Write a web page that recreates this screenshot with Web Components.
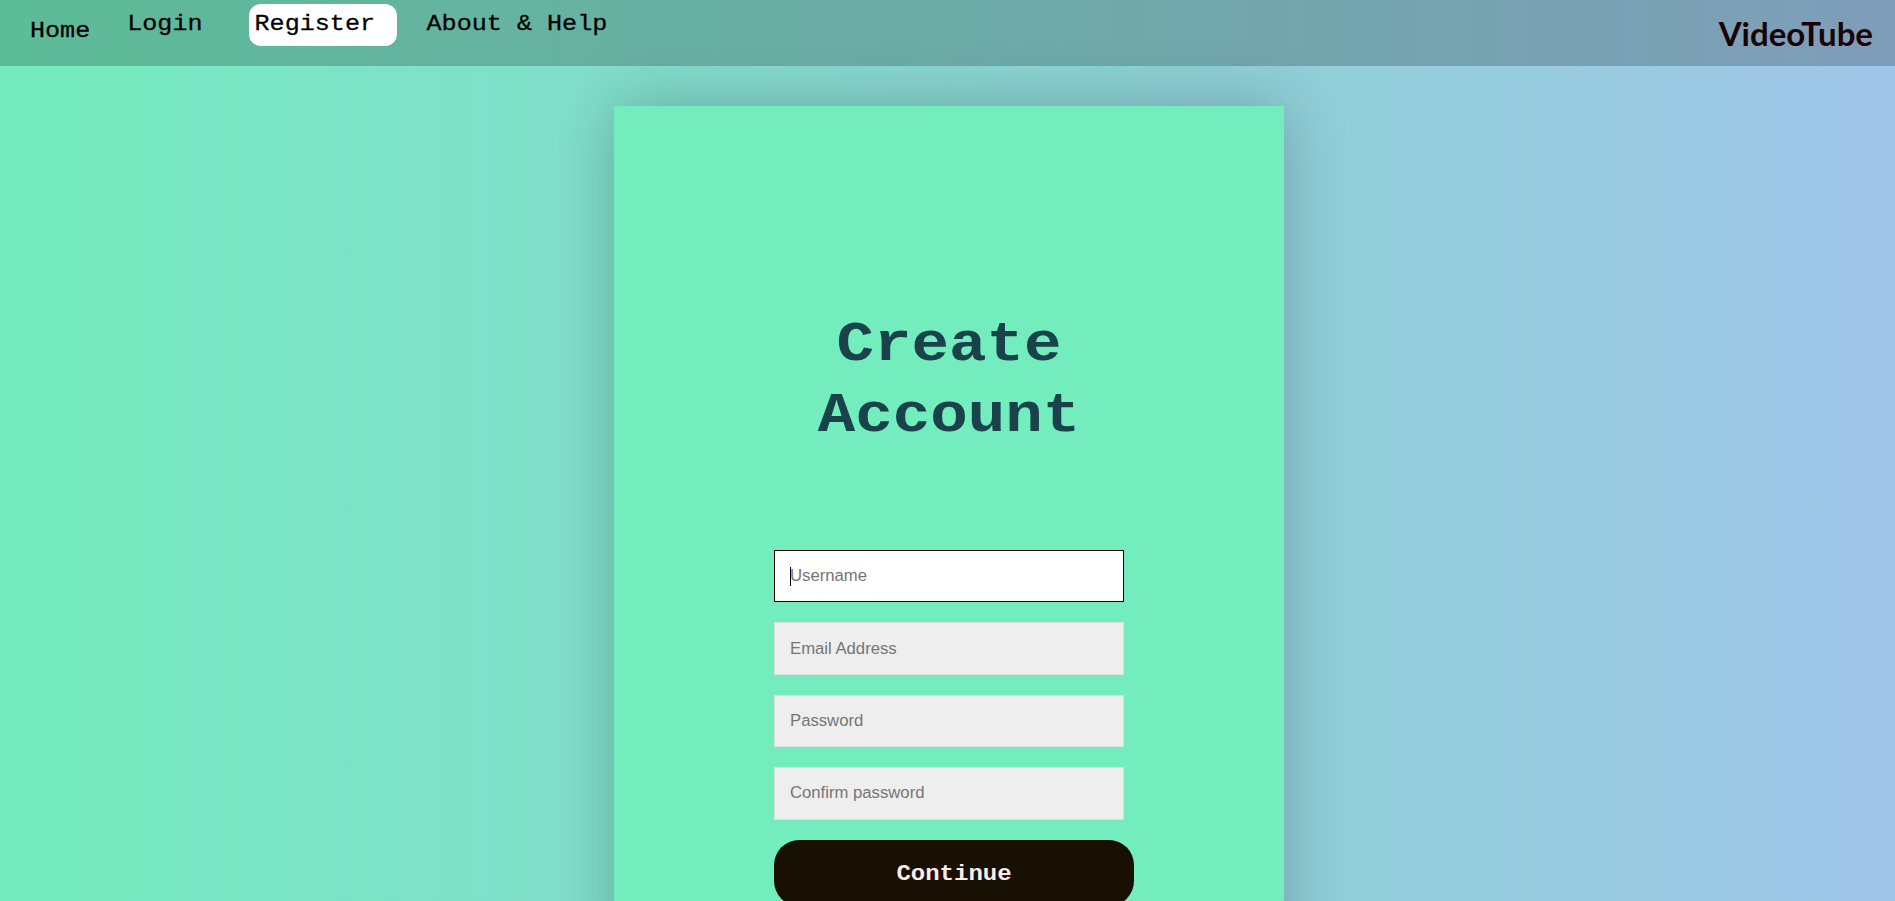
<!DOCTYPE html>
<html lang="en"><head><meta charset="utf-8"><title>VideoTube - Register</title>
<style>html,body{margin:0;height:100%;overflow:hidden}body{font-family:"Liberation Mono",monospace;color:#000}</style></head>
<body><video-page></video-page>
<script>
const define=(name,html)=>customElements.define(name,class extends HTMLElement{
  constructor(){super();this.attachShadow({mode:'open'}).innerHTML=html;}
});
define('nav-link',`<style>:host{display:block;box-sizing:border-box;height:42px;padding:0 6px;border-radius:12px;font-size:25.1px;line-height:42px;white-space:pre;-webkit-text-stroke:.3px #000}
:host([active]){background:#fff}a{display:block;transform:scaleY(.9);color:inherit;text-decoration:none}</style><a><slot></slot></a>`);
define('site-nav',`<style>:host{display:flex;align-items:flex-start;box-sizing:border-box;height:66px;padding:4px 22px 0 24px;background:rgba(0,0,0,.2)}
.home{margin:7px 25px 0 0}.login{margin-right:40px}.register{width:148px;margin-right:24px}
.brand{margin-left:auto;font:700 33px/58px Lato,sans-serif;color:#1a0205}</style>
<nav-link class="home">Home</nav-link><nav-link class="login">Login</nav-link><nav-link class="register" active>Register</nav-link><nav-link>About &amp; Help</nav-link><span class="brand">VideoTube</span>`);
customElements.define('text-field',class extends HTMLElement{
  connectedCallback(){
    this.attachShadow({mode:'open'}).innerHTML=`<style>:host{display:block;margin-bottom:20px}
input{display:block;box-sizing:border-box;width:350px;height:52.4px;margin:0;padding:0 15px;border:1px solid #ddd;border-radius:0;outline:0;background:#eee;font:16.7px "Liberation Sans",Arial,sans-serif}
input::placeholder{color:#757575}:host([current]) input{background:#fff;border-color:#000;background-image:linear-gradient(#000,#000);background-size:1px 19px;background-position:15px 16px;background-repeat:no-repeat}</style><input>`;
    const i=this.shadowRoot.querySelector('input');i.type=this.getAttribute('type')||'text';i.placeholder=this.getAttribute('label');
  }
});
define('submit-button',`<style>:host{display:block}button{display:block;width:360px;height:66px;border:0;border-radius:25px;background:#171003;color:#fbecea;font:700 24px "Liberation Mono",monospace;padding:3px 0 0}span{display:inline-block;transform:scaleY(.9)}</style><button><span><slot></slot></span></button>`);
define('register-card',`<style>:host{display:block;box-sizing:border-box;width:670px;height:900px;margin:40px 0 0 614px;padding:195.3px 150px 0 160px;background:#74edbe;box-shadow:0 0 60px rgba(0,0,0,.24)}
h1{margin:0 0 87.3px;width:350px;font-size:62.5px;line-height:80.7px;font-weight:700;text-align:center;color:#19424a;transform:scaleY(.88)}</style>
<h1>Create Account</h1><text-field label="Username" current></text-field><text-field label="Email Address"></text-field><text-field type="password" label="Password"></text-field><text-field type="password" label="Confirm password"></text-field><submit-button>Continue</submit-button>`);
define('video-page',`<style>:host{display:flow-root;height:901px;overflow:hidden;background:linear-gradient(to right,#74ebbe,#90d0d8 67%,#9fc5e8)}</style><site-nav></site-nav><register-card></register-card>`);
</script></body></html>
